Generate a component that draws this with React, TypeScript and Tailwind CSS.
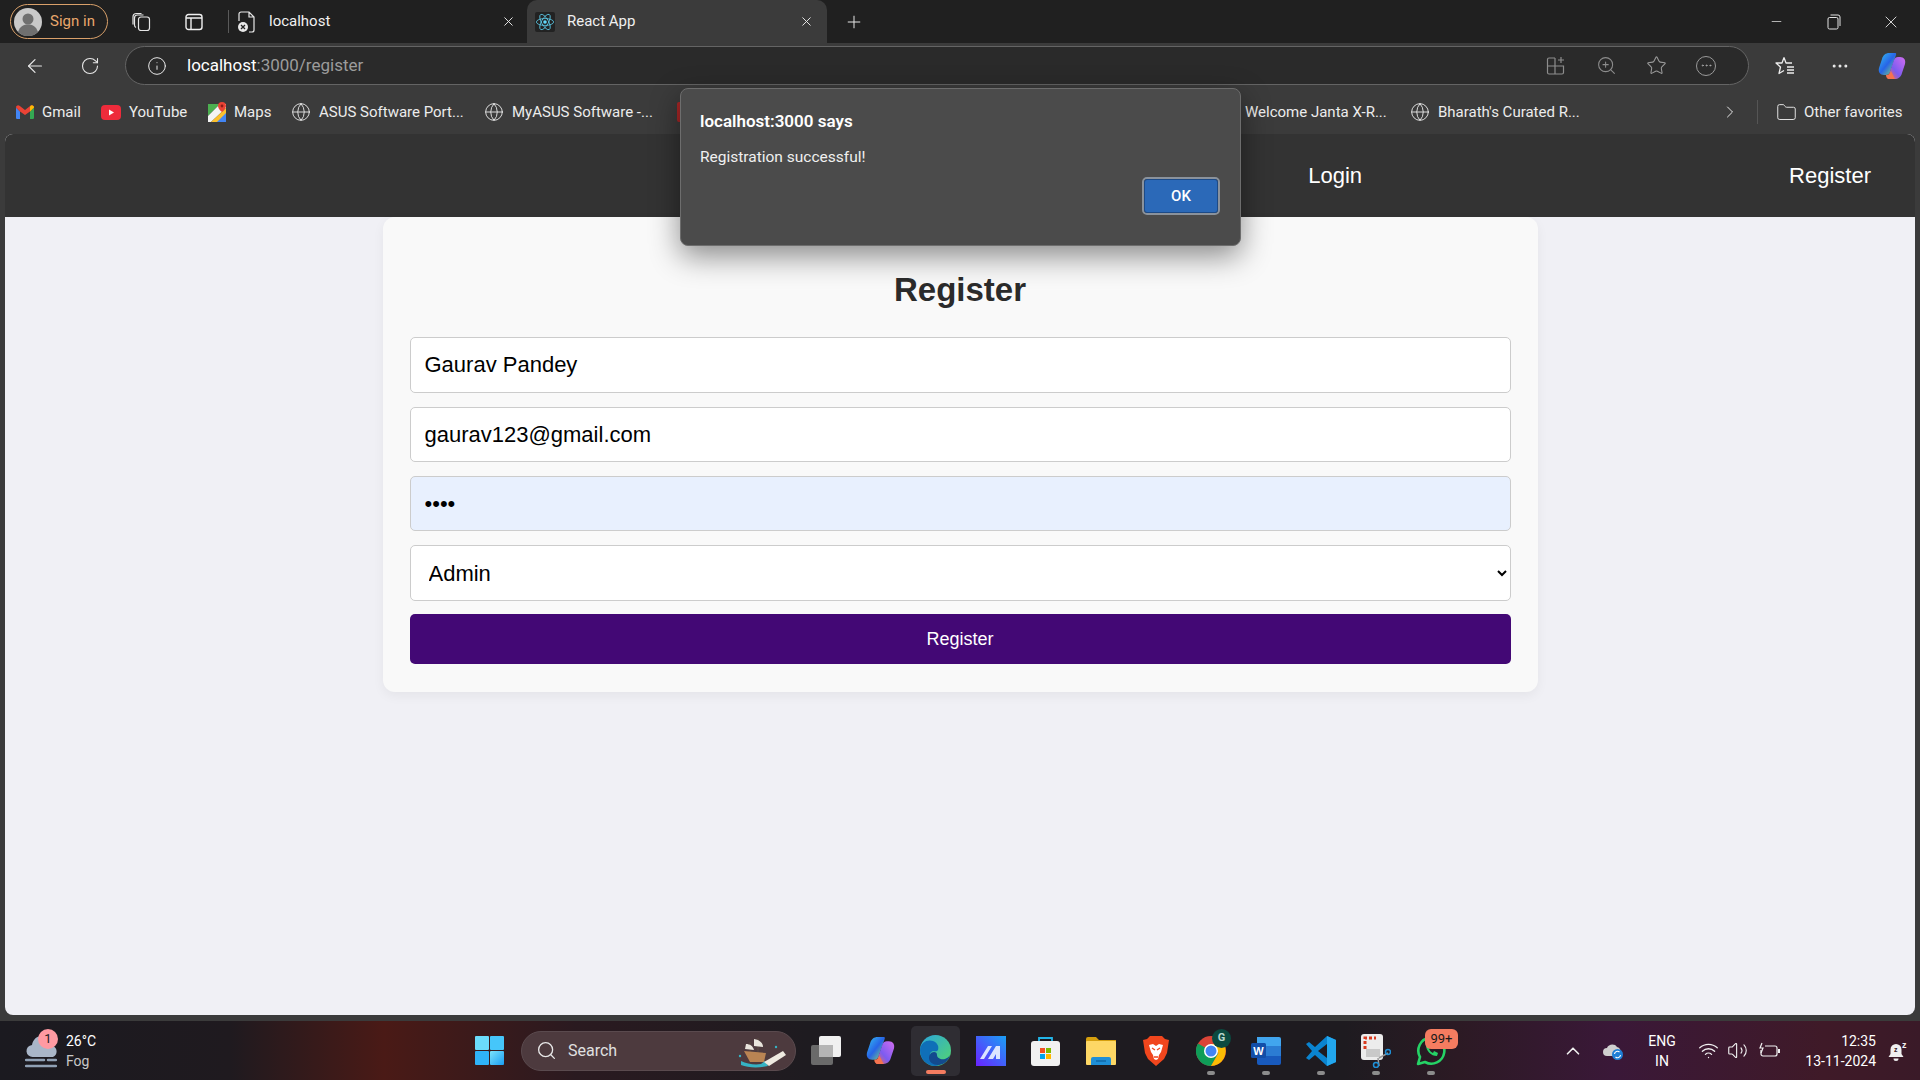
import {
  ArrowLeft,
  ChevronRight,
  ChevronUp,
  CirclePlus,
  Ellipsis,
  Folder,
  Globe,
  Info,
  Minus,
  Plus,
  RotateCw,
  Search,
  Star,
  Volume2,
  Wifi,
  X,
  ZoomIn,
} from "lucide-react";

function Avatar() {
  return (
    <svg width="28" height="28" viewBox="0 0 28 28">
      <circle cx="14" cy="14" r="14" fill="#c9c9c9" />
      <circle cx="14" cy="11" r="5.5" fill="#6f6f6f" />
      <path d="M4 24c2-6 6-7.5 10-7.5S22 18 24 24a14 14 0 0 1-20 0z" fill="#6f6f6f" />
    </svg>
  );
}

function CollectionsIcon() {
  return (
    <svg width="20" height="20" viewBox="0 0 20 20" fill="none" stroke="#e6e6e6" strokeWidth="1.2">
      <rect x="7.5" y="5" width="11" height="13.5" rx="2.5" />
      <path d="M5 15.5c-1-.5-1.500-1.500-1.500-2.500V6c0-2 1-3 3-3h6" />
      <path d="M2 12.500V5c0-2.500 1.500-3.500 3.500-3.500h5" />
    </svg>
  );
}

function VerticalTabsIcon() {
  return (
    <svg width="18" height="18" viewBox="0 0 18 18" fill="none" stroke="#f0f0f0" strokeWidth="1.4">
      <rect x="1" y="1.500" width="16" height="15" rx="2.500" />
      <path d="M1 5h16M6 5v11.500" />
    </svg>
  );
}

function BrokenPageIcon() {
  return (
    <svg width="18" height="22" viewBox="0 0 18 22" fill="none">
      <path d="M5 1h7l5 5v13a2 2 0 0 1-2 2h-3M2 10V3a2 2 0 0 1 2-2h1M12 1v5h5" stroke="#e8e8e8" strokeWidth="1.200" />
      <circle cx="6" cy="16" r="5" fill="#e8e8e8" />
      <path d="M4 14l4 4M8 14l-4 4" stroke="#222" strokeWidth="1.300" />
    </svg>
  );
}

function ReactFavicon() {
  return (
    <div className="flex h-[20px] w-[20px] items-center justify-center rounded-[2px] bg-[#222222]">
      <svg width="20" height="20" viewBox="-11 -11 22 22" fill="none" stroke="#61dafb" strokeWidth="0.800">
        <circle r="2" fill="#61dafb" stroke="none" />
        <ellipse rx="9.500" ry="3.800" />
        <ellipse rx="9.500" ry="3.800" transform="rotate(60)" />
        <ellipse rx="9.500" ry="3.800" transform="rotate(120)" />
      </svg>
    </div>
  );
}

function GmailIcon() {
  return (
    <svg width="18" height="14" viewBox="0 0 18 14">
      <path d="M0 2.500V12.500A1.300 1.300 0 0 0 1.300 14H4V6.500L0 2.500z" fill="#4285f4" />
      <path d="M14 14h2.700A1.300 1.300 0 0 0 18 12.500V2.500l-4 4V14z" fill="#34a853" />
      <path d="M0 2.500 4 6.500 9 10l5-3.500 4-4C18 .5 16 -.5 14.500.7L9 5 3.500.7C2 -.5 0 .5 0 2.500z" fill="#ea4335" />
      <path d="M14 2v4.500l4-4C18 .5 16 -.5 14.500.7z" fill="#fbbc04" />
    </svg>
  );
}

function YouTubeIcon() {
  return (
    <svg width="20" height="15" viewBox="0 0 20 15">
      <rect width="20" height="15" rx="4" fill="#ee2b3b" />
      <path d="M8 4.500 13 7.500 8 10.500z" fill="#fff" />
    </svg>
  );
}

function MapsIcon() {
  return (
    <svg width="18" height="20" viewBox="0 0 18 20">
      <path d="M0 2h12L0 14z" fill="#4caf50" />
      <path d="M0 14 12 2h6v4L3 20H0z" fill="#f4f4f4" />
      <path d="M3 20 18 6v14z" fill="#fbc02d" />
      <path d="M9 20l9-9v9z" fill="#4285f4" />
      <path d="M14 0a4 4 0 0 1 4 4c0 3-4 6-4 6s-4-3-4-6a4 4 0 0 1 4-4z" fill="#ea4335" />
      <circle cx="14" cy="4" r="1.400" fill="#8c1d18" />
    </svg>
  );
}

function CopilotIcon({ size }: { size: number }) {
  return (
    <svg width={size} height={size} viewBox="0 0 28 28">
      <defs>
        <linearGradient id={`cpA${size}`} x1="0" y1="0" x2="1" y2="1">
          <stop offset="0" stopColor="#35c1f1" />
          <stop offset="0.500" stopColor="#2764e7" />
          <stop offset="1" stopColor="#8de36b" />
        </linearGradient>
        <linearGradient id={`cpB${size}`} x1="1" y1="0" x2="0" y2="1">
          <stop offset="0" stopColor="#d36cf0" />
          <stop offset="0.600" stopColor="#7b5cf0" />
          <stop offset="1" stopColor="#f56b4e" />
        </linearGradient>
      </defs>
      <path d="M11 1h6c1 0 1.500.5 1 2l-6 17c-.8 2-2 3-4 3H6c-4 0-6-3-5-7l3-9C5 3 8 1 11 1z" fill={`url(#cpA${size})`} />
      <path d="M20 5h2c4 0 6 3 5 7l-3 9c-1 4-4 6-7 6h-6c-1 0-1.500-.5-1-2l6-17c.8-2 2-3 4-3z" fill={`url(#cpB${size})`} />
      <path d="M8 23c3 0 4-1.500 5-4l4 8h-6c-2 0-3-2-3-4z" fill="#f5734e" />
    </svg>
  );
}

function FavoritesIcon() {
  return (
    <svg width="22" height="22" viewBox="0 0 22 22" fill="none" stroke="#ececec" strokeWidth="1.300">
      <path d="M10 2.500 12 8h6M10 2.500 8 8H2l4.500 4L5 18.500 10 15.500" strokeLinejoin="round" />
      <path d="M13 12h7M13 15h7M13 18h7" />
    </svg>
  );
}

function AppsIcon() {
  return (
    <svg width="20" height="20" viewBox="0 0 20 20" fill="none" stroke="#8d8d8d" strokeWidth="1.200">
      <path d="M9 2H3a1.500 1.500 0 0 0-1.500 1.500v13A1.500 1.500 0 0 0 3 18h13a1.500 1.500 0 0 0 1.500-1.500V10H1.500M9 2v16" />
      <path d="M15 1v6M12 4h6" />
    </svg>
  );
}

function RestoreIcon() {
  return (
    <svg width="14" height="16" viewBox="0 0 14 16" fill="none" stroke="#e4e4e4" strokeWidth="1">
      <rect x="1" y="3.500" width="10" height="11.500" rx="1.500" />
      <path d="M3.500 1h7.500a2 2 0 0 1 2 2v9" />
    </svg>
  );
}

function WindowsLogo() {
  return (
    <svg width="29" height="29" viewBox="0 0 29 29">
      <defs>
        <linearGradient id="winA" x1="0" y1="0" x2="1" y2="1">
          <stop offset="0" stopColor="#7be3fb" />
          <stop offset="1" stopColor="#1a9df2" />
        </linearGradient>
      </defs>
      <rect width="14" height="14" rx="1" fill="#6bdcfb" />
      <rect x="15" width="14" height="14" rx="1" fill="#46c6fa" />
      <rect y="15" width="14" height="14" rx="1" fill="#2fb3f8" />
      <rect x="15" y="15" width="14" height="14" rx="1" fill="url(#winA)" />
    </svg>
  );
}

function WeatherIcon() {
  return (
    <svg width="32" height="36" viewBox="0 0 32 36">
      <path d="M8 24a6 6 0 0 1-1-12c1-6 6-10 12-9 6 1 9 5 9 10a6 6 0 0 1 0 11z" fill="#a9b6c8" />
      <path d="M1 27h18M23 27h8M1 33h30" stroke="#8fa0b4" strokeWidth="2.500" strokeLinecap="round" />
    </svg>
  );
}

function ShipArt() {
  return (
    <svg width="50" height="34" viewBox="0 0 50 34">
      <path d="M21 4v18M13 8v14" stroke="#5a4b40" strokeWidth="1" />
      <path d="M17 5c6 1 9 4 9 8l-9-1zM9 10c4 0 7 2 8 6l-9-1z" fill="#e8e4dc" />
      <path d="M7 17l22 2-2 9H13z" fill="#b98453" />
      <path d="M4 27c6 3 14 4 20 3l4-3 3 5c-8 2-20 2-27-1z" fill="#35b3c4" />
      <path d="M27 28 46 17l3 4-17 11z" fill="#eeeae0" />
      <circle cx="3" cy="22" r="1.200" fill="#35b3c4" />
      <circle cx="39" cy="13" r="1.200" fill="#35b3c4" />
    </svg>
  );
}

function TaskView() {
  return (
    <svg width="30" height="29" viewBox="0 0 30 29">
      <rect x="0" y="9" width="22" height="20" rx="2" fill="#6a6a6a" />
      <rect x="8" y="0" width="22" height="21" rx="2" fill="#f0f0f0" />
      <rect x="8" y="9" width="14" height="12" fill="#b5b5b5" />
    </svg>
  );
}

function EdgeIcon() {
  return (
    <svg width="31" height="31" viewBox="0 0 31 31">
      <defs>
        <linearGradient id="edA" x1="0" y1="0" x2="1" y2="1">
          <stop offset="0" stopColor="#2aa5dd" />
          <stop offset="1" stopColor="#55d66c" />
        </linearGradient>
      </defs>
      <circle cx="15.500" cy="15.500" r="15.500" fill="url(#edA)" />
      <path d="M0 15.500C0 7 8 4 13 6c5 2 6 6 5 9-1 2-4 1-5 1-3 1-4 4-2 7 2 4 8 5 13 3-3 3-6 5-9 5C7 31 0 24 0 15.500z" fill="#0f6fb8" />
      <path d="M14 17c2 0 3 1 3 3 0 3 4 5 8 4 2-1 4-2 5-4-1 5-6 10-12 10-5 0-9-3-9-7 0-3 2-6 5-6z" fill="#134a8e" />
    </svg>
  );
}

function AppMIcon() {
  return (
    <svg width="30" height="30" viewBox="0 0 30 30">
      <defs>
        <linearGradient id="mA" x1="0" y1="1" x2="1" y2="0">
          <stop offset="0" stopColor="#6a22ff" />
          <stop offset="1" stopColor="#1aa0f5" />
        </linearGradient>
      </defs>
      <rect width="30" height="30" fill="url(#mA)" />
      <path d="M4 23 12 10h4l-8 13zM12 23l8-13h4v13h-4v-5l-3 5z" fill="#dbe4ff" />
    </svg>
  );
}

function StoreIcon() {
  return (
    <svg width="29" height="30" viewBox="0 0 29 30">
      <path d="M8 5V2h13v3" fill="none" stroke="#22b5e8" strokeWidth="1.800" />
      <rect y="5" width="29" height="25" rx="3" fill="#f1f1f1" />
      <rect x="9" y="12" width="5" height="5" fill="#f25022" />
      <rect x="15" y="12" width="5" height="5" fill="#7fba00" />
      <rect x="9" y="18" width="5" height="5" fill="#00a4ef" />
      <rect x="15" y="18" width="5" height="5" fill="#ffb900" />
    </svg>
  );
}

function FolderIcon() {
  return (
    <svg width="30" height="28" viewBox="0 0 30 28">
      <path d="M0 2a2 2 0 0 1 2-2h8l3 3h17v5H0z" fill="#d59f0e" />
      <rect y="4" width="30" height="24" rx="1" fill="#fdd765" />
      <path d="M5 28v-6a2 2 0 0 1 2-2h16a2 2 0 0 1 2 2v6z" fill="#1f8fd6" />
      <path d="M10 24h10" stroke="#0d5f9c" strokeWidth="1.200" />
    </svg>
  );
}

function BraveIcon() {
  return (
    <svg width="26" height="30" viewBox="0 0 26 30">
      <path d="M7 0h12l3 3 4 1-2 13-3 6-8 7-8-7-3-6L0 4l4-1z" fill="#f1461d" />
      <path d="M6 9l4-1 3 2 3-2 4 1-2 7-2 3-1 4-2 1-2-1-1-4-2-3z" fill="#fff" />
      <path d="M9 12l3 2M17 12l-3 2M11 21h4" stroke="#f1461d" strokeWidth="1.300" />
    </svg>
  );
}

function ChromeIcon() {
  return (
    <svg width="30" height="30" viewBox="0 0 30 30">
      <circle cx="15" cy="15" r="15" fill="#db4437" />
      <path d="M15 15 2 7.500A15 15 0 0 0 15 30l7.500-13z" fill="#0f9d58" />
      <path d="M15 8h13a15 15 0 0 1-13 22l7.500-13z" fill="#fbbc04" />
      <circle cx="15" cy="15" r="7" fill="#fff" />
      <circle cx="15" cy="15" r="5.500" fill="#4285f4" />
    </svg>
  );
}

function WordIcon() {
  return (
    <svg width="30" height="30" viewBox="0 0 30 30">
      <path d="M6 1h22a2 2 0 0 1 2 2v7H6z" fill="#41a5ee" />
      <rect x="6" y="10" width="24" height="10" fill="#2b7cd3" />
      <path d="M6 20h24v7a2 2 0 0 1-2 2H8a2 2 0 0 1-2-2z" fill="#185abd" />
      <rect y="7" width="15" height="15" rx="1.500" fill="#124ea8" />
      <text x="7.500" y="18.500" fill="#fff" fontSize="11" fontWeight="700" textAnchor="middle" fontFamily="Liberation Sans, sans-serif">W</text>
    </svg>
  );
}

function VsCodeIcon() {
  return (
    <svg width="30" height="30" viewBox="0 0 30 30">
      <path d="M21 0 30 4v22l-9 4-12-11-6 5-3-2 6-7-6-7 3-2 6 5z" fill="#0a84d0" />
      <path d="M21 0 30 4v22l-9 4z" fill="#22a7ee" />
      <path d="M21 8v14l-9-7z" fill="#1e1c22" />
    </svg>
  );
}

function SnipIcon() {
  return (
    <svg width="30" height="34" viewBox="0 0 30 34">
      <rect width="22" height="26" rx="3" fill="#ececec" />
      <path d="M4 15V4h11" fill="none" stroke="#d83b20" strokeWidth="3" strokeDasharray="3 2" />
      <rect x="5" y="15" width="14" height="8" fill="#c9c9c9" />
      <path d="M17 24 18 32M18 24 27 19" stroke="#9a9a9a" strokeWidth="1.500" />
      <circle cx="27" cy="18" r="2.500" fill="none" stroke="#1f8fd6" strokeWidth="1.500" />
      <circle cx="15" cy="31" r="2.500" fill="none" stroke="#1f8fd6" strokeWidth="1.500" />
    </svg>
  );
}

function WhatsAppIcon() {
  return (
    <svg width="30" height="30" viewBox="0 0 30 30" fill="none">
      <path d="M2 28l2-7a13 13 0 1 1 5 5z" stroke="#25d366" strokeWidth="2.600" strokeLinejoin="round" />
      <path d="M10 9c0 6 5 11 11 11l1-3-4-2-1 2c-2-1-3-2-4-4l2-1-2-4z" fill="#25d366" />
    </svg>
  );
}

function OneDriveSync() {
  return (
    <svg width="21" height="20" viewBox="0 0 21 20">
      <path d="M4 15a4 4 0 0 1 0-8c1-4 8-5 10-1a4 4 0 0 1 3 6v3z" fill="#cfcfcf" />
      <circle cx="14.500" cy="13.500" r="5.500" fill="#1f7fd6" />
      <path d="M11.500 13a3 3 0 0 1 5-2M17.500 14a3 3 0 0 1-5 2" stroke="#fff" strokeWidth="1.100" fill="none" />
    </svg>
  );
}

function BatteryIcon() {
  return (
    <svg width="22" height="18" viewBox="0 0 22 18" fill="none" stroke="#f0f0f0" strokeWidth="1.200">
      <path d="M7 4h10a2 2 0 0 1 2 2v6a2 2 0 0 1-2 2H5a2 2 0 0 1-2-2V8" />
      <path d="M20 7.500h1.500v3H20" fill="#f0f0f0" />
      <path d="M4 1 2 6h3l-2 5" />
    </svg>
  );
}

function SnoozeBell() {
  return (
    <svg width="20" height="22" viewBox="0 0 20 22">
      <path d="M8 4a5.500 5.500 0 0 1 5.500 5.500V14l2 3H.5l2-3V9.500A5.500 5.500 0 0 1 8 4z" fill="#f0f0f0" />
      <path d="M5.500 18.500a2.500 2.500 0 0 0 5 0z" fill="#f0f0f0" />
      <text x="14" y="8" fontSize="9" fontWeight="700" fill="#f0f0f0" fontFamily="Liberation Sans, sans-serif">z</text>
      <text x="6" y="12" fontSize="7" fontWeight="700" fill="#3a1a28" fontFamily="Liberation Sans, sans-serif">z</text>
    </svg>
  );
}

function Bookmark({ className, icon, label }: { className: string; icon: React.ReactNode; label: string }) {
  return (
    <div className={`flex shrink-0 items-center gap-[8px] ${className}`}>
      {icon}
      <span className="text-[15px] leading-none whitespace-nowrap text-[#ececec]">{label}</span>
    </div>
  );
}

function TaskCell({ children, running }: { children: React.ReactNode; running?: boolean }) {
  return (
    <div className="relative flex h-full w-[55px] shrink-0 items-center justify-center">
      {children}
      {running && <span className="absolute bottom-[5px] h-[4px] w-[8px] rounded-full bg-[#8c8c8c]" />}
    </div>
  );
}

const inputClass =
  "w-full rounded-[5px] border border-[#cccccc] px-[14px] text-[22px] text-black outline-none font-['Liberation_Sans',sans-serif]";

export default function App() {
  return (
    <div className="relative flex h-screen w-[1920px] flex-col overflow-hidden bg-[#3b3b3b] font-['Roboto',sans-serif]">
      {/* tab strip */}
      <div className="flex h-[43px] shrink-0 items-stretch bg-[#202020]">
        <div className="ml-[10px] mt-[4px] flex h-[35px] w-[98px] items-center gap-[8px] rounded-full border border-[#d9a06a] pl-[3px]">
          <Avatar />
          <span className="text-[15px] text-[#e9a76c]">Sign in</span>
        </div>
        <div className="ml-[23px] flex w-[54px] items-center">
          <CollectionsIcon />
        </div>
        <div className="flex w-[43px] items-center">
          <VerticalTabsIcon />
        </div>
        <div className="my-[10px] w-px bg-[#5a5a5a]" />
        <div className="ml-[8px] flex w-[290px] items-center rounded-b-lg">
          <BrokenPageIcon />
          <span className="ml-[14px] text-[15px] text-[#f0f0f0]">localhost</span>
          <X size={15} className="ml-auto mr-[11px] text-[#eeeeee]" strokeWidth={1.500} />
        </div>
        <div className="flex w-[300px] items-center rounded-t-[10px] bg-[#3b3b3b] pl-[8px]">
          <ReactFavicon />
          <span className="ml-[12px] text-[15px] text-[#f0f0f0]">React App</span>
          <X size={15} className="ml-auto mr-[13px] text-[#eeeeee]" strokeWidth={1.500} />
        </div>
        <div className="ml-[17px] flex items-center">
          <Plus size={20} className="text-[#e6e6e6]" strokeWidth={1.200} />
        </div>
        <div className="ml-auto flex items-center">
          <div className="flex w-[57px] justify-center">
            <Minus size={15} className="text-[#e4e4e4]" strokeWidth={1.200} />
          </div>
          <div className="flex w-[57px] justify-center">
            <RestoreIcon />
          </div>
          <div className="flex w-[58px] justify-center pr-[1px]">
            <X size={20} className="text-[#e4e4e4]" strokeWidth={1.100} />
          </div>
        </div>
      </div>

      {/* toolbar */}
      <div className="flex h-[47px] shrink-0 items-center bg-[#3b3b3b] pb-[2px] pl-[24px]">
        <ArrowLeft size={22} className="text-[#e8e8e8]" strokeWidth={1.300} />
        <RotateCw size={20} className="ml-[34px] text-[#e8e8e8]" strokeWidth={1.300} />
        <div className="ml-[25px] flex h-[39px] w-[1624px] items-center rounded-full border border-[#646464] bg-[#2a2a2a] pl-[21px]">
          <Info size={20} className="text-[#e8e8e8]" strokeWidth={1.200} />
          <span className="ml-[20px] text-[17px] text-white">
            localhost<span className="text-[#9c9c9c]">:3000/register</span>
          </span>
          <div className="ml-auto flex items-center">
            <div className="flex w-[50px] justify-center">
              <AppsIcon />
            </div>
            <div className="flex w-[50px] justify-center">
              <ZoomIn size={21} className="text-[#8d8d8d]" strokeWidth={1.200} />
            </div>
            <div className="flex w-[50px] justify-center">
              <Star size={21} className="text-[#9a9a9a]" strokeWidth={1.200} />
            </div>
            <div className="mr-[17px] flex w-[50px] justify-center">
              <div className="flex h-[20px] w-[20px] items-center justify-center rounded-full border border-[#9a9a9a]">
                <Ellipsis size={13} className="text-[#b0b0b0]" strokeWidth={1.500} />
              </div>
            </div>
          </div>
        </div>
        <div className="ml-[25px] flex w-[22px] justify-center">
          <FavoritesIcon />
        </div>
        <Ellipsis size={20} className="ml-[34px] text-[#ececec]" strokeWidth={1.600} />
        <div className="ml-[28px]">
          <CopilotIcon size={28} />
        </div>
      </div>

      {/* bookmarks bar */}
      <div className="flex h-[44px] shrink-0 items-center bg-[#3b3b3b] pl-[16px]">
        <Bookmark className="w-[85px]" icon={<GmailIcon />} label="Gmail" />
        <Bookmark className="w-[107px]" icon={<YouTubeIcon />} label="YouTube" />
        <Bookmark className="w-[83px]" icon={<MapsIcon />} label="Maps" />
        <Bookmark className="w-[193px]" icon={<Globe size={20} strokeWidth={1.100} className="text-[#e8e8e8]" />} label="ASUS Software Port..." />
        <Bookmark className="w-[193px]" icon={<Globe size={20} strokeWidth={1.100} className="text-[#e8e8e8]" />} label="MyASUS Software -..." />
        <div className="h-[20px] w-[568px] shrink-0">
          <div className="h-[20px] w-[18px] rounded-[2px] bg-[#a82626]" />
        </div>
        <div className="w-[165px] shrink-0 text-[15px] leading-none whitespace-nowrap text-[#ececec]">Welcome Janta X-R...</div>
        <Bookmark className="w-[310px]" icon={<Globe size={20} strokeWidth={1.100} className="text-[#e8e8e8]" />} label="Bharath's Curated R..." />
        <ChevronRight size={20} className="shrink-0 text-[#e8e8e8]" strokeWidth={1.200} />
        <div className="ml-[17px] h-[24px] w-px shrink-0 bg-[#555555]" />
        <Folder size={21} className="ml-[18px] shrink-0 text-[#e8e8e8]" strokeWidth={1.100} />
        <span className="ml-[7px] text-[15px] leading-none whitespace-nowrap text-[#ececec]">Other favorites</span>
      </div>

      {/* page */}
      <div className="mx-[5px] flex min-h-0 flex-1 flex-col overflow-hidden rounded-lg bg-[#f0f0f5] font-['Liberation_Sans',sans-serif]">
        <nav className="flex h-[83px] shrink-0 items-center justify-end gap-[427px] bg-[#333333] pr-[44px] text-[22px] text-white">
          <span>Login</span>
          <span>Register</span>
        </nav>
        <form className="mx-auto h-[475px] w-[1155px] rounded-[12px] bg-[#f9f9f9] px-[27px] shadow-[0_4px_12px_rgba(0,0,0,0.05)]">
          <h2 className="mb-[28px] pt-[54px] text-center text-[33px] leading-[38px] font-bold text-[#2b2b2b]">Register</h2>
          <div className="flex flex-col gap-[14px]">
            <input className={`${inputClass} h-[56px] bg-white`} value="Gaurav Pandey" readOnly />
            <input className={`${inputClass} h-[55px] bg-white`} value="gaurav123@gmail.com" readOnly />
            <input className={`${inputClass} h-[55px] bg-[#e8f0fe]`} type="password" value="1234" readOnly />
            <select className={`${inputClass} h-[56px] bg-white text-[#333333]`} defaultValue="Admin">
              <option>Admin</option>
              <option>User</option>
            </select>
          </div>
          <button type="button" className="mt-[13px] h-[50px] w-full rounded-[5px] bg-[#430875] text-[18px] text-white">
            Register
          </button>
        </form>
      </div>

      {/* taskbar */}
      <div className="mt-[6px] flex h-[59px] shrink-0 items-center bg-[linear-gradient(90deg,#1b1a20_0%,#1f1a1f_12%,#4a1a16_20%,#2a1a20_30%,#1e1b20_42%,#1e1b20_70%,#2c1a24_76%,#3a1838_84%,#3f1a28_95%,#3a1a28_100%)] text-white">
        <div className="relative ml-[25px] flex w-[450px] shrink-0 items-center gap-[9px]">
          <WeatherIcon />
          <span className="absolute left-[13px] top-[-2px] flex h-[20px] w-[20px] items-center justify-center rounded-full bg-[#ff9aa2] text-[13px] text-[#222222] font-['Roboto',sans-serif]">
            1
          </span>
          <div className="flex flex-col text-[14px] leading-[20px] font-['Roboto',sans-serif]">
            <span>26°C</span>
            <span className="text-[#c8c8c8]">Fog</span>
          </div>
        </div>
        <div className="shrink-0">
          <WindowsLogo />
        </div>
        <div className="ml-[17px] flex h-[40px] w-[275px] shrink-0 items-center rounded-full border border-[#5a4a4e] bg-[#4d3a3e] pl-[14px] pr-[8px] font-['Roboto',sans-serif]">
          <Search size={21} className="text-[#e8e8e8]" strokeWidth={1.500} />
          <span className="ml-[11px] text-[16px] text-[#e0e0e0]">Search</span>
          <div className="ml-auto">
            <ShipArt />
          </div>
        </div>
        <div className="ml-[2px] flex h-full shrink-0 items-center">
          <TaskCell>
            <TaskView />
          </TaskCell>
          <TaskCell>
            <CopilotIcon size={29} />
          </TaskCell>
          <TaskCell>
            <div className="flex h-[50px] w-[49px] items-center justify-center rounded-[5px] bg-[#2f2d33]">
              <EdgeIcon />
            </div>
            <span className="absolute bottom-[6px] h-[4px] w-[20px] rounded-full bg-[#f47c60]" />
          </TaskCell>
          <TaskCell>
            <AppMIcon />
          </TaskCell>
          <TaskCell>
            <StoreIcon />
          </TaskCell>
          <TaskCell>
            <FolderIcon />
          </TaskCell>
          <TaskCell>
            <BraveIcon />
          </TaskCell>
          <TaskCell running>
            <ChromeIcon />
            <span className="absolute right-[7px] top-[8px] flex h-[19px] w-[19px] items-center justify-center rounded-full bg-[#0b4a40] text-[11px] font-bold text-[#b7d8cf] font-['Roboto',sans-serif]">
              G
            </span>
          </TaskCell>
          <TaskCell running>
            <WordIcon />
          </TaskCell>
          <TaskCell running>
            <VsCodeIcon />
          </TaskCell>
          <TaskCell running>
            <SnipIcon />
          </TaskCell>
          <TaskCell running>
            <WhatsAppIcon />
            <span className="absolute left-[22px] top-[8px] flex h-[20px] w-[33px] items-center justify-center rounded-[6px] bg-[#f47c60] text-[13px] text-[#1a1a1a] font-['Roboto',sans-serif]">
              99+
            </span>
          </TaskCell>
        </div>
        <ChevronUp size={22} className="ml-[104px] shrink-0 text-[#f0f0f0]" strokeWidth={1.800} />
        <div className="ml-[19px] shrink-0">
          <OneDriveSync />
        </div>
        <div className="ml-[18px] flex w-[40px] shrink-0 flex-col items-center text-[14px] leading-[20px] font-['Roboto',sans-serif]">
          <span>ENG</span>
          <span>IN</span>
        </div>
        <Wifi size={21} className="ml-[16px] shrink-0 text-[#f0f0f0]" strokeWidth={1.500} />
        <Volume2 size={21} className="ml-[8px] shrink-0 text-[#f0f0f0]" strokeWidth={1.300} />
        <div className="ml-[10px] shrink-0">
          <BatteryIcon />
        </div>
        <div className="ml-[20px] flex w-[76px] shrink-0 flex-col items-end text-[14px] leading-[20px] font-['Roboto',sans-serif]">
          <span>12:35</span>
          <span className="whitespace-nowrap">13-11-2024</span>
        </div>
        <div className="ml-[12px] shrink-0">
          <SnoozeBell />
        </div>
      </div>

      {/* alert dialog */}
      <div className="absolute left-[680px] top-[88px] h-[158px] w-[561px] rounded-[8px] border border-[#6d6d6d] bg-[#4b4b4b] px-[19px] pt-[21px] shadow-[0_10px_30px_rgba(0,0,0,0.45)]">
        <div className="text-[17px] leading-[22px] font-semibold text-white">localhost:3000 says</div>
        <div className="mt-[14px] text-[15.500px] leading-[22px] text-[#f0f0f0]">Registration successful!</div>
        <div className="mt-[9px] flex justify-end pr-[1px]">
          <div className="rounded-[5px] border-[2px] border-[#8a929c]">
            <button type="button" className="flex h-[34px] w-[74px] items-center justify-center rounded-[3px] border border-[#1d4a86] bg-[#2b69b8] text-[15px] font-medium text-white">
              OK
            </button>
          </div>
        </div>
      </div>
    </div>
  );
}
